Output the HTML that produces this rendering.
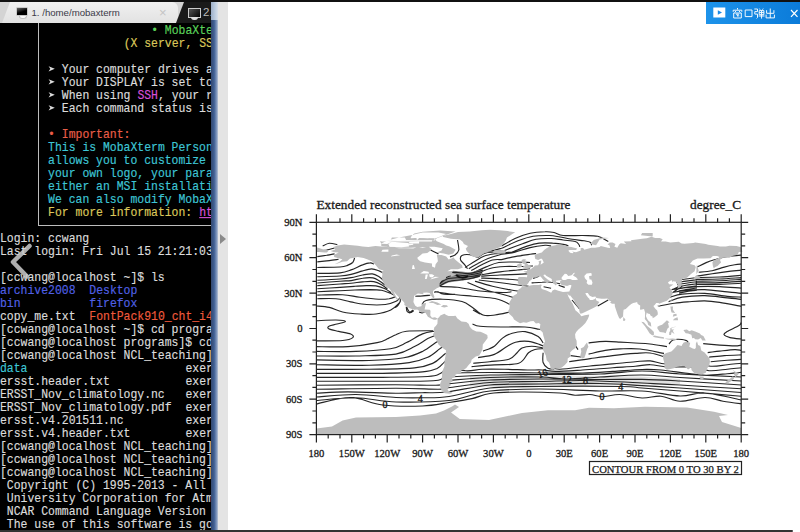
<!DOCTYPE html>
<html><head><meta charset="utf-8"><style>
html,body{margin:0;padding:0;width:800px;height:532px;overflow:hidden;background:#fff;position:relative}
.t{position:absolute;white-space:pre;font-family:"Liberation Mono",monospace;font-size:11.45px;line-height:13px;height:13px;transform:scaleY(1.08);transform-origin:0 10px;-webkit-text-stroke:0.15px currentColor}
#term{position:absolute;left:0;top:23px;width:211px;height:509px;background:#000;overflow:hidden}
#term .in{position:absolute;left:0;top:-23px;width:800px;height:600px}
#tabbar{position:absolute;left:0;top:2px;width:211px;height:21px;background:#d4d4d4;overflow:hidden}
#topbar{position:absolute;left:0;top:0;width:800px;height:2px;background:#111}
#sb{position:absolute;left:211px;top:2px;width:7px;height:530px;background:linear-gradient(90deg,#34486e,#3f5f94 45%,#7f96bc 80%,#b8c4d6)}
#sbtop{position:absolute;left:211px;top:2px;width:7px;height:18px;background:linear-gradient(90deg,#9fb0c8,#b8c8dc 50%,#d8e0ea)}
#strip{position:absolute;left:218px;top:2px;width:10px;height:530px;background:#e4e4e4}
#btn{position:absolute;left:706px;top:2px;width:94px;height:22px;background:linear-gradient(90deg,#1d93ea,#0b7bd9)}
#bot{position:absolute;left:0;top:530px;width:793px;height:2px;background:#333;border-radius:0 2px 2px 0}
svg{position:absolute;left:0;top:0}
</style></head><body>
<div id="term"><div class="in">
<div class="t" style="left:151.14px;top:24.00px;color:#5ad25a">• MobaXterm Personal Edition v8.0</div>
<div class="t" style="left:123.66px;top:37.00px;color:#dcc85a">(X server, SSH client and network tools)</div>
<div class="t" style="left:48.09px;top:63.00px;color:#dcdcdc">  Your computer drives are accessible through the </div>
<div class="t" style="left:48.09px;top:76.00px;color:#dcdcdc">  Your DISPLAY is set to 192.168.1.2:0.0</div>
<div class="t" style="left:48.09px;top:89.00px;color:#dcdcdc">  When using </div>
<div class="t" style="left:137.40px;top:89.00px;color:#d850d8">SSH</div>
<div class="t" style="left:158.01px;top:89.00px;color:#dcdcdc">, your remote DISPLAY is automatically</div>
<div class="t" style="left:48.09px;top:102.00px;color:#dcdcdc">  Each command status is specified by a special</div>
<div class="t" style="left:48.09px;top:128.00px;color:#ea5e48">• Important:</div>
<div class="t" style="left:48.09px;top:141.00px;color:#3ec6d6">This is MobaXterm Personal Edition. The Profes</div>
<div class="t" style="left:48.09px;top:154.00px;color:#3ec6d6">allows you to customize MobaXterm for your com</div>
<div class="t" style="left:48.09px;top:167.00px;color:#3ec6d6">your own logo, your parameters, your welcome m</div>
<div class="t" style="left:48.09px;top:180.00px;color:#3ec6d6">either an MSI installation package or a portab</div>
<div class="t" style="left:48.09px;top:193.00px;color:#3ec6d6">We can also modify MobaXterm or develop the pl</div>
<div class="t" style="left:48.09px;top:206.00px;color:#dcc85a">For more information: </div>
<div class="t" style="left:199.23px;top:206.00px;color:#d850d8;text-decoration:underline">htt</div>
<div class="t" style="left:0.00px;top:232.00px;color:#dcdcdc">Login: ccwang</div>
<div class="t" style="left:0.00px;top:245.00px;color:#dcdcdc">Last login: Fri Jul 15 21:21:03 2016 from 192.168.1.2</div>
<div class="t" style="left:0.00px;top:271.00px;color:#dcdcdc">[ccwang@localhost ~]$ ls</div>
<div class="t" style="left:0.00px;top:284.00px;color:#5060e6">archive2008</div>
<div class="t" style="left:89.31px;top:284.00px;color:#5060e6">Desktop</div>
<div class="t" style="left:0.00px;top:297.00px;color:#5060e6">bin</div>
<div class="t" style="left:89.31px;top:297.00px;color:#5060e6">firefox</div>
<div class="t" style="left:0.00px;top:310.00px;color:#dcdcdc">copy_me.txt</div>
<div class="t" style="left:89.31px;top:310.00px;color:#f05a3c">FontPack910_cht_i486-linux</div>
<div class="t" style="left:0.00px;top:323.00px;color:#dcdcdc">[ccwang@localhost ~]$ cd programs/</div>
<div class="t" style="left:0.00px;top:336.00px;color:#dcdcdc">[ccwang@localhost programs]$ cd NCL_teaching/</div>
<div class="t" style="left:0.00px;top:349.00px;color:#dcdcdc">[ccwang@localhost NCL_teaching]$ ls</div>
<div class="t" style="left:0.00px;top:362.00px;color:#3ec6d6">data</div>
<div class="t" style="left:185.49px;top:362.00px;color:#dcdcdc">exercise</div>
<div class="t" style="left:0.00px;top:375.00px;color:#dcdcdc">ersst.header.txt</div>
<div class="t" style="left:185.49px;top:375.00px;color:#dcdcdc">exercise</div>
<div class="t" style="left:0.00px;top:388.00px;color:#dcdcdc">ERSST_Nov_climatology.nc</div>
<div class="t" style="left:185.49px;top:388.00px;color:#dcdcdc">exercise</div>
<div class="t" style="left:0.00px;top:401.00px;color:#dcdcdc">ERSST_Nov_climatology.pdf</div>
<div class="t" style="left:185.49px;top:401.00px;color:#dcdcdc">exercise</div>
<div class="t" style="left:0.00px;top:414.00px;color:#dcdcdc">ersst.v4.201511.nc</div>
<div class="t" style="left:185.49px;top:414.00px;color:#dcdcdc">exercise</div>
<div class="t" style="left:0.00px;top:427.00px;color:#dcdcdc">ersst.v4.header.txt</div>
<div class="t" style="left:185.49px;top:427.00px;color:#dcdcdc">exercise</div>
<div class="t" style="left:0.00px;top:440.00px;color:#dcdcdc">[ccwang@localhost NCL_teaching]$ ncl</div>
<div class="t" style="left:0.00px;top:453.00px;color:#dcdcdc">[ccwang@localhost NCL_teaching]$ ncl</div>
<div class="t" style="left:0.00px;top:466.00px;color:#dcdcdc">[ccwang@localhost NCL_teaching]$ ncl ex.ncl</div>
<div class="t" style="left:6.87px;top:479.00px;color:#dcdcdc">Copyright (C) 1995-2013 - All Rights Reserved</div>
<div class="t" style="left:6.87px;top:492.00px;color:#dcdcdc">University Corporation for Atmospheric Research</div>
<div class="t" style="left:6.87px;top:505.00px;color:#dcdcdc">NCAR Command Language Version 6.1.2</div>
<div class="t" style="left:6.87px;top:518.00px;color:#dcdcdc">The use of this software is governed by a License</div>
<svg width="60" height="120" viewBox="0 40 60 120" style="position:absolute;left:0;top:40px"><path d="M48.6 66.2 L54.8 68.8 L48.6 71.4 L50.3 68.8Z M48.6 79.2 L54.8 81.8 L48.6 84.4 L50.3 81.8Z M48.6 92.2 L54.8 94.8 L48.6 97.4 L50.3 94.8Z M48.6 105.2 L54.8 107.8 L48.6 110.4 L50.3 107.8Z " fill="#dcdcdc"/></svg>
<div style="position:absolute;left:37.5px;top:23px;width:1px;height:202.5px;background:#bdbdbd"></div>
<div style="position:absolute;left:37.5px;top:225px;width:180px;height:1px;background:#bdbdbd"></div>
<svg width="60" height="60" style="left:0;top:235px" viewBox="0 235 60 60"><path d="M29.5 246 L13 262 L27 276.5" fill="none" stroke="rgba(205,205,205,0.85)" stroke-width="4.5" stroke-linecap="round" stroke-linejoin="round"/></svg>
</div></div>
<div id="tabbar">
 <div style="position:absolute;left:2px;top:0;width:176px;height:21px;background:linear-gradient(#f0f0f0,#e2e2e2);border-radius:0 6px 0 0;clip-path:polygon(8px 0,100% 0,100% 100%,0 100%)"></div>
 <div style="position:absolute;left:176px;top:0;width:40px;height:21px;background:#1a1a1a;clip-path:polygon(8px 0,100% 0,100% 100%,0 100%)"></div>
 <div style="position:absolute;left:15.5px;top:4.5px;width:10px;height:7px;background:linear-gradient(160deg,#666,#000 55%);border:1px solid #c8c8c8;border-radius:1px"></div>
 <div style="position:absolute;left:18.5px;top:13.5px;width:6px;height:2.5px;background:#fafafa;border-radius:0 0 3px 3px;border:1px solid #c4c4c4;border-top:none"></div>
 <div style="position:absolute;left:31.5px;top:5px;font-family:'Liberation Sans',sans-serif;font-size:9.65px;color:#3a3a48;white-space:pre">1. /home/mobaxterm</div>
 <div style="position:absolute;left:159px;top:3px;font-family:'Liberation Sans',sans-serif;font-size:13px;color:#c4c4c4">×</div>
 <div style="position:absolute;left:188px;top:6px;width:11px;height:8px;background:linear-gradient(135deg,#555,#000);border:1px solid #ccc"></div>
 <div style="position:absolute;left:191px;top:15px;width:7px;height:3px;background:#ddd;border-radius:0 0 3px 3px"></div>
 <div style="position:absolute;left:203px;top:4px;font-family:'Liberation Sans',sans-serif;font-size:11.5px;color:#bbb">2.</div>
</div>
<div id="topbar"></div>
<div id="strip"></div>
<div id="sb"></div><div id="sbtop"></div>
<svg width="800" height="532" viewBox="0 0 800 532">
<path d="M220 234 L226 239 L220 244Z" fill="#8a8a8a"/>
<g><path d="M470 376 L520 375 L560 375.5 L600 376 L640 376.5 L680 379 L680 384 L640 384.5 L600 385 L560 386 L520 386.5 L470 386.5Z" fill="#c8c8c8" opacity="0.55"/><path d="M322.7 246.0 C323.8 245.5 326.9 243.5 329.3 243.3 C331.8 243.1 336.0 244.4 337.3 244.6 M317.3 251.3 C318.9 251.1 323.8 250.5 326.6 250.0 C329.5 249.4 333.3 248.3 334.6 248.0 M317.3 256.6 C318.9 256.4 323.8 255.7 326.6 255.3 C329.5 254.8 333.3 254.2 334.6 253.9 M317.3 261.9 C319.3 261.7 325.8 261.0 329.3 260.6 C332.9 260.2 337.1 259.5 338.6 259.3 M317.3 267.5 C321.1 267.4 334.9 267.3 340.0 267.0 C345.0 266.6 345.3 266.2 347.4 265.4 C349.5 264.6 351.5 263.7 352.7 262.5 C353.9 261.2 354.3 258.7 354.6 257.9 M317.3 273.4 C321.1 273.3 334.3 273.4 340.0 272.9 C345.6 272.3 347.4 271.3 351.1 269.9 C354.9 268.6 359.4 266.0 362.6 264.9 C365.7 263.7 368.2 263.0 370.0 262.9 C371.9 262.7 373.2 263.9 373.8 264.1 M317.3 276.8 C321.1 276.7 334.3 276.4 340.0 276.0 C345.6 275.6 347.4 275.3 351.1 274.4 C354.9 273.6 359.2 271.8 362.6 270.9 C366.0 269.9 368.9 268.9 371.6 268.9 C374.4 268.9 377.2 270.2 379.1 270.9 C381.0 271.5 382.4 272.6 383.1 273.0 M317.3 280.3 C321.1 280.1 334.3 279.4 340.0 279.0 C345.6 278.5 347.4 278.3 351.1 277.6 C354.9 277.0 359.1 275.6 362.6 275.0 C366.1 274.4 369.6 273.6 372.3 273.9 C375.1 274.2 377.2 275.7 379.1 276.8 C381.0 278.0 382.9 280.0 383.6 280.6 M317.3 283.0 C321.1 282.7 334.3 281.6 340.0 281.2 C345.6 280.8 347.4 281.1 351.1 280.6 C354.9 280.1 359.0 278.6 362.6 278.2 C366.2 277.7 370.1 277.4 373.0 277.9 C375.8 278.4 377.8 280.1 379.8 281.2 C381.8 282.4 384.1 284.4 385.0 285.0 M317.3 285.6 C321.1 285.4 334.3 284.4 340.0 284.0 C345.6 283.6 347.4 283.6 351.1 283.2 C354.9 282.9 358.8 282.2 362.6 281.9 C366.4 281.6 370.5 281.1 373.8 281.6 C377.0 282.2 379.8 283.8 382.0 285.0 C384.3 286.2 386.5 288.2 387.4 288.8 M317.3 288.8 C321.1 288.6 333.7 287.8 340.0 287.4 C346.2 286.9 350.5 286.6 354.9 286.3 C359.2 286.0 362.7 285.7 366.2 285.6 C369.7 285.6 372.8 285.4 375.9 285.9 C379.0 286.4 382.4 287.7 385.0 288.8 C387.5 290.0 390.1 292.0 391.1 292.7 M317.3 291.8 C321.1 291.6 333.7 291.0 340.0 290.7 C346.2 290.4 349.9 290.2 354.9 290.0 C359.9 289.8 365.6 289.6 370.0 289.6 C374.5 289.7 378.2 289.8 381.4 290.3 C384.5 290.8 386.8 291.9 388.9 292.7 C391.1 293.5 393.2 294.7 394.0 295.1 M317.3 295.1 C321.5 295.0 335.5 294.3 342.6 294.7 C349.7 295.1 354.0 296.6 360.1 297.3 C366.1 298.1 373.9 299.0 378.8 299.2 C383.6 299.4 386.4 299.1 389.2 298.7 C392.1 298.2 394.8 296.9 395.9 296.5 M317.3 298.7 C320.4 298.7 330.4 298.1 336.0 298.7 C341.5 299.2 345.5 300.9 350.6 301.9 C355.7 302.8 360.9 304.1 366.7 304.5 C372.5 305.0 380.5 305.1 385.4 304.5 C390.3 304.0 394.0 302.3 396.1 301.3 C398.3 300.4 398.1 299.1 398.5 298.7 M316.4 306.0 C318.5 306.2 324.9 306.4 329.3 307.4 C333.7 308.4 337.5 310.9 342.6 312.0 C347.7 313.1 354.4 313.7 360.0 314.0 C365.6 314.3 370.9 314.7 376.0 314.0 C381.1 313.3 387.0 311.8 390.8 310.0 C394.6 308.2 397.1 305.0 398.8 303.4 C400.5 301.8 400.5 301.0 400.8 300.5 M316.4 320.7 C319.7 320.6 331.2 319.9 336.0 320.0 C340.8 320.1 345.2 320.7 345.4 321.4 C345.6 322.1 339.7 323.2 337.0 324.0 C334.3 324.8 330.8 325.2 329.4 326.0 C328.0 326.8 327.1 327.8 328.7 328.7 C330.2 329.6 335.0 330.5 338.7 331.4 C342.4 332.3 348.3 333.0 350.7 334.0 C353.1 335.0 354.1 336.5 352.8 337.6 C351.5 338.7 348.8 339.9 342.7 340.5 C336.6 341.1 320.8 340.8 316.4 340.9 M406.8 307.4 C407.2 308.1 408.4 311.6 409.5 312.0 C410.5 312.5 412.2 310.4 412.8 310.0 M316.0 346.6 C321.3 346.6 337.7 347.3 347.9 346.6 C358.2 346.0 370.6 344.0 377.2 342.6 C383.9 341.3 384.8 340.0 387.9 338.6 C391.0 337.3 392.8 335.9 395.9 334.7 C399.0 333.4 400.3 331.9 406.5 331.2 C412.7 330.5 428.7 330.8 433.1 330.7 M316.0 351.4 C322.7 351.4 343.5 351.9 355.9 351.4 C368.4 351.0 382.1 350.2 390.5 348.8 C399.0 347.3 401.2 345.1 406.5 342.6 C411.8 340.2 417.8 335.8 422.5 333.9 C427.2 331.9 432.5 331.6 434.5 331.2 M316.0 356.0 C322.7 356.0 342.6 356.3 355.9 356.0 C369.2 355.6 386.1 355.6 395.9 354.1 C405.6 352.5 409.2 349.2 414.5 346.6 C419.8 344.1 424.0 340.6 427.8 338.6 C431.6 336.7 435.6 335.3 437.1 334.7 M316.0 359.9 C324.9 360.0 354.6 360.8 369.2 360.5 C383.9 360.1 395.0 359.3 403.9 357.8 C412.7 356.3 417.2 354.0 422.5 351.4 C427.8 348.9 432.7 344.6 435.8 342.6 C438.9 340.7 440.2 340.4 441.1 340.0 M316.0 364.7 C324.9 364.8 353.7 365.6 369.2 365.3 C384.8 364.9 399.4 363.9 409.2 362.6 C418.9 361.3 422.7 359.6 427.8 357.3 C432.9 355.0 437.1 350.6 439.8 348.8 C442.5 346.9 443.1 346.5 443.8 346.1 M316.0 369.3 C324.9 369.3 352.8 369.5 369.2 369.3 C385.7 369.0 403.9 369.0 414.5 367.9 C425.2 366.9 428.5 365.1 433.1 363.1 C437.8 361.1 440.4 357.6 442.5 356.0 C444.5 354.3 445.1 353.7 445.7 353.3 M316.0 373.3 C327.1 373.3 364.8 373.5 382.6 373.3 C400.3 373.0 413.4 372.7 422.5 371.9 C431.6 371.1 433.6 370.0 437.1 368.5 C440.7 366.9 442.2 364.0 443.8 362.6 C445.3 361.2 446.0 360.4 446.5 359.9 M316.0 377.3 C327.1 377.3 363.9 377.4 382.6 377.3 C401.2 377.1 418.3 377.0 427.8 376.5 C437.4 375.9 436.7 375.2 439.8 373.8 C442.9 372.4 445.3 368.9 446.5 367.9 M316.0 381.2 C329.3 381.2 376.3 381.3 395.9 381.2 C415.4 381.2 425.4 381.2 433.1 380.7 C440.9 380.3 440.2 379.6 442.5 378.6 C444.8 377.6 446.2 375.3 447.0 374.6 M316.0 385.2 C329.3 385.2 375.9 384.7 395.9 384.7 C415.8 384.7 427.6 385.5 435.8 385.2 C444.0 385.0 443.1 384.0 445.1 383.4 C447.1 382.7 447.3 381.6 447.8 381.2 M316.0 389.2 C329.3 389.1 375.5 388.2 395.9 388.2 C416.3 388.2 430.0 389.3 438.5 389.2 C446.9 389.2 445.1 388.1 446.5 387.9 M316.4 404.0 C322.1 402.9 339.6 397.3 350.6 397.5 C361.6 397.7 370.6 403.6 382.6 405.0 C394.6 406.4 411.4 406.4 422.5 406.0 C433.6 405.6 440.8 403.7 449.0 402.5 C457.2 401.3 465.2 400.1 472.0 398.6 C478.8 397.1 482.0 394.6 490.0 393.5 C498.0 392.4 508.3 392.1 520.0 392.0 C531.7 391.9 550.8 392.5 560.0 393.0 C569.2 393.5 570.0 394.9 575.0 395.2 C580.0 395.4 585.5 394.2 590.0 394.5 C594.5 394.8 597.0 396.7 602.0 396.7 C607.0 396.7 613.3 394.3 620.0 394.5 C626.7 394.7 635.2 397.7 642.0 398.0 C648.8 398.3 654.7 395.7 661.0 396.2 C667.3 396.7 672.7 401.0 680.0 401.2 C687.3 401.4 697.8 397.5 705.0 397.5 C712.2 397.5 717.0 400.1 723.0 401.2 C729.0 402.2 738.2 403.4 741.2 403.8 M316.4 400.5 C323.0 400.1 342.7 397.6 356.0 397.8 C369.3 398.1 380.5 401.6 396.0 402.0 C411.5 402.4 436.3 401.7 449.0 400.5 C461.7 399.3 465.2 396.6 472.0 395.0 C478.8 393.4 478.7 392.0 490.0 391.0 C501.3 390.0 521.7 389.0 540.0 389.0 C558.3 389.0 583.0 390.7 600.0 391.0 C617.0 391.3 628.7 390.2 642.0 391.0 C655.3 391.8 669.5 395.7 680.0 396.0 C690.5 396.3 694.8 392.3 705.0 393.0 C715.2 393.7 735.2 398.8 741.2 400.0 M316.4 397.0 C323.0 396.6 342.7 394.4 356.0 394.5 C369.3 394.6 384.9 396.9 396.0 397.5 C407.1 398.1 413.7 398.0 422.5 397.8 C431.3 397.6 437.8 398.1 449.0 396.5 C460.2 394.9 474.8 389.7 490.0 388.0 C505.2 386.3 518.2 386.8 540.0 386.5 C561.8 386.2 604.0 386.2 621.0 386.5 C638.0 386.8 632.2 387.2 642.0 388.0 C651.8 388.8 663.5 389.6 680.0 391.0 C696.5 392.4 731.0 395.4 741.2 396.3 M316.4 393.2 C321.7 393.0 334.7 391.9 348.0 391.9 C361.3 391.9 383.7 393.1 396.0 393.2 C408.3 393.3 413.5 392.9 422.0 392.7 C430.5 392.5 435.7 393.3 447.0 392.0 C458.3 390.7 474.5 386.3 490.0 385.0 C505.5 383.7 521.7 384.2 540.0 384.0 C558.3 383.8 583.0 383.2 600.0 383.5 C617.0 383.8 628.7 384.9 642.0 385.6 C655.3 386.4 663.5 386.9 680.0 388.0 C696.5 389.1 731.0 391.8 741.2 392.5 M447.0 388.0 C454.2 387.1 474.5 383.6 490.0 382.5 C505.5 381.4 524.2 381.8 540.0 381.5 C555.8 381.2 568.0 380.2 585.0 380.5 C602.0 380.8 626.2 382.2 642.0 383.0 C657.8 383.8 663.5 384.0 680.0 385.0 C696.5 386.0 731.0 388.2 741.2 388.8 M447.0 384.0 C454.2 383.3 474.5 380.8 490.0 380.0 C505.5 379.2 521.7 379.1 540.0 379.0 C558.3 378.9 583.0 379.4 600.0 379.5 C617.0 379.6 628.7 379.1 642.0 379.4 C655.3 379.6 663.5 380.1 680.0 381.0 C696.5 381.9 731.0 384.3 741.2 385.0 M447.0 380.5 C454.2 380.0 474.5 378.1 490.0 377.5 C505.5 376.9 527.2 376.8 540.0 377.0 C552.8 377.2 557.0 379.0 567.0 379.0 C577.0 379.0 587.5 377.7 600.0 377.0 C612.5 376.3 628.7 374.9 642.0 375.0 C655.3 375.1 663.5 376.5 680.0 377.5 C696.5 378.5 731.0 380.4 741.2 381.0 M447.0 377.0 C454.2 376.7 474.5 375.4 490.0 375.0 C505.5 374.6 521.7 374.7 540.0 374.5 C558.3 374.3 583.0 374.6 600.0 374.0 C617.0 373.4 628.7 371.0 642.0 371.0 C655.3 371.0 663.5 373.0 680.0 374.0 C696.5 375.0 731.0 376.5 741.2 377.0 M447.0 373.0 C454.2 372.9 474.0 372.5 490.0 372.5 C506.0 372.5 527.6 372.9 543.0 373.0 C558.4 373.1 571.0 373.3 582.6 373.0 C594.2 372.7 602.8 372.0 612.7 371.4 C622.6 370.8 634.0 369.7 642.0 369.5 C650.0 369.3 653.8 369.4 661.0 370.0 C668.2 370.6 677.5 372.1 685.0 373.0 C692.5 373.9 699.0 375.1 706.0 375.2 C713.0 375.3 721.4 374.2 727.3 373.7 C733.2 373.2 738.9 372.4 741.2 372.2 M447.0 366.0 C450.1 366.8 459.7 370.2 465.6 370.8 C471.5 371.4 475.7 369.6 482.2 369.3 C488.7 369.1 497.2 369.2 504.7 369.3 C512.2 369.4 521.0 369.9 527.3 370.0 C533.6 370.1 537.6 369.8 542.3 370.0 C547.0 370.2 548.9 371.4 555.6 371.4 C562.3 371.4 573.1 370.6 582.6 370.0 C592.1 369.4 603.9 368.3 612.7 367.7 C621.5 367.1 629.0 366.7 635.3 366.2 C641.6 365.7 645.0 364.6 650.3 364.7 C655.6 364.8 660.4 366.6 667.0 367.0 C673.6 367.4 683.0 366.4 690.0 367.0 C697.0 367.6 703.0 370.3 709.2 370.7 C715.4 371.1 722.0 369.7 727.3 369.2 C732.6 368.7 738.9 367.9 741.2 367.7 M552.0 367.0 C553.3 367.4 553.7 369.4 560.0 369.2 C566.3 369.0 581.2 366.9 590.0 366.0 C598.8 365.1 605.2 364.6 612.7 363.9 C620.2 363.2 629.0 362.2 635.3 361.7 C641.6 361.2 645.2 360.5 650.3 360.9 C655.3 361.3 659.0 363.6 665.6 364.0 C672.2 364.4 682.5 362.6 690.0 363.0 C697.5 363.4 704.5 365.9 710.7 366.2 C716.9 366.5 722.2 365.2 727.3 364.7 C732.4 364.2 738.9 363.4 741.2 363.2 M703.2 343.6 C706.0 343.9 714.4 344.7 719.7 345.1 C725.0 345.5 731.2 345.9 734.8 345.9 C738.4 345.9 740.1 345.2 741.2 345.1 M707.7 352.6 C709.7 352.4 715.2 351.6 719.7 351.1 C724.2 350.6 731.2 349.7 734.8 349.6 C738.4 349.5 740.1 350.3 741.2 350.4 M709.2 357.1 C711.7 356.9 719.0 356.0 724.3 355.6 C729.6 355.2 738.4 355.0 741.2 354.9 M710.7 361.7 C713.5 361.4 722.2 360.6 727.3 360.2 C732.4 359.8 738.9 359.5 741.2 359.4 M588.6 342.9 C591.4 342.6 599.9 341.5 605.2 341.4 C610.5 341.3 615.2 341.8 620.2 342.1 C625.2 342.4 630.0 342.7 635.0 343.0 C640.0 343.3 644.7 343.4 650.0 344.0 C655.3 344.6 664.2 346.2 667.0 346.6 M588.6 354.1 C591.4 353.5 599.9 351.3 605.2 350.4 C610.5 349.5 614.4 349.1 620.2 348.9 C626.0 348.7 632.7 348.2 640.0 349.0 C647.3 349.8 660.0 352.7 664.0 353.4 M569.1 361.7 C572.6 361.2 582.9 359.6 590.2 358.6 C597.5 357.6 605.2 356.5 612.7 355.6 C620.2 354.7 629.1 353.8 635.3 353.4 C641.5 353.0 645.0 352.4 650.0 353.0 C655.0 353.6 662.5 356.3 665.0 357.0 M575.0 345.0 L578.0 349.6 M570.6 355.6 L581.0 357.0 M472.5 324.0 C473.8 324.4 475.0 325.8 480.0 326.3 C485.0 326.8 495.0 326.9 502.5 327.0 C510.0 327.1 518.9 326.6 525.0 327.0 C531.1 327.4 535.2 328.6 539.0 329.3 C542.8 330.0 546.5 330.7 548.0 331.0 M483.0 351.1 C484.9 350.3 491.1 348.4 494.4 346.2 C497.6 344.0 499.5 340.3 502.5 338.1 C505.5 335.9 508.4 334.3 512.2 333.2 C516.0 332.1 520.9 331.1 525.2 331.6 C529.5 332.2 535.2 334.6 538.2 336.5 C541.2 338.4 542.3 341.9 543.1 343.0 M478.1 357.6 C480.8 357.1 489.5 356.3 494.4 354.4 C499.3 352.5 503.9 348.2 507.4 346.2 C510.9 344.2 512.0 343.0 515.5 342.2 C519.0 341.4 524.4 341.0 528.5 341.4 C532.6 341.8 537.3 343.8 539.9 344.6 C542.5 345.4 543.2 345.9 543.9 346.2 M473.2 363.3 C475.9 363.0 483.5 362.4 489.5 361.7 C495.5 361.0 504.4 360.7 509.0 359.2 C513.6 357.7 514.9 354.6 517.1 352.7 C519.3 350.8 519.6 349.0 522.0 347.9 C524.4 346.8 528.2 346.2 531.7 346.2 C535.2 346.2 541.2 347.6 543.1 347.9 M471.6 366.6 C475.4 366.3 486.5 365.4 494.4 364.9 C502.2 364.3 513.0 365.3 518.7 363.3 C524.4 361.3 525.8 355.0 528.5 352.7 C531.2 350.4 532.6 350.2 535.0 349.5 C537.4 348.8 541.8 348.8 543.1 348.7 M543.1 352.7 C543.1 354.3 542.3 359.9 543.1 362.5 C543.9 365.1 546.1 367.1 548.0 368.2 C549.9 369.3 553.4 368.9 554.5 369.0 M741.2 322.6 C740.8 323.1 741.4 324.1 739.0 325.6 C736.6 327.1 729.5 330.1 727.0 331.6 C724.5 333.1 723.5 333.6 724.0 334.6 C724.5 335.6 727.1 336.9 730.0 337.6 C732.9 338.3 739.3 338.8 741.2 339.0 M658.1 306.2 C660.9 305.7 669.3 303.9 674.6 303.2 C679.9 302.4 684.7 302.1 689.7 301.7 C694.7 301.3 699.7 300.8 704.7 300.9 C709.7 301.0 713.6 301.5 719.7 302.4 C725.8 303.3 737.6 305.6 741.2 306.2 M669.0 344.0 C669.7 343.3 670.8 340.8 673.0 340.0 C675.2 339.2 679.5 339.2 682.0 339.5 C684.5 339.8 687.8 341.1 688.0 342.0 C688.2 342.9 683.8 344.5 683.0 345.0 M697.2 267.1 C698.7 266.4 703.2 263.9 706.2 262.6 C709.2 261.3 711.7 260.5 715.2 259.5 C718.7 258.5 723.0 257.2 727.3 256.5 C731.6 255.8 738.9 255.2 741.2 255.0 M698.7 272.3 C701.0 272.1 707.9 271.7 712.2 270.8 C716.5 269.9 720.5 268.1 724.3 267.1 C728.1 266.1 732.0 265.3 734.8 264.8 C737.6 264.3 740.1 264.2 741.2 264.1 M697.2 276.1 C699.7 275.7 707.2 274.6 712.2 273.8 C717.2 273.1 722.5 272.2 727.3 271.6 C732.1 271.0 738.9 270.4 741.2 270.1 M695.7 277.6 C699.7 277.5 712.1 277.3 719.7 277.0 C727.3 276.6 737.6 275.6 741.2 275.3 M695.7 279.4 C699.7 279.3 712.1 279.3 719.7 279.0 C727.3 278.7 737.6 277.8 741.2 277.6 M695.7 281.2 C699.7 281.1 712.1 281.1 719.7 280.8 C727.3 280.5 737.6 279.6 741.2 279.4 M695.7 282.9 C699.7 282.9 712.1 282.9 719.7 282.6 C727.3 282.4 737.6 281.6 741.2 281.4 M695.7 284.5 C699.7 284.5 712.1 284.6 719.7 284.4 C727.3 284.2 737.6 283.5 741.2 283.3 M676.0 280.5 C677.7 280.2 682.5 279.5 686.0 279.0 C689.5 278.5 695.2 277.8 697.0 277.5 M676.5 282.6 C678.1 282.4 682.6 281.6 686.0 281.1 C689.4 280.6 695.2 279.9 697.0 279.6 M677.0 284.7 C678.5 284.4 682.7 283.7 686.0 283.2 C689.3 282.7 695.2 281.9 697.0 281.7 M677.5 286.8 C678.9 286.6 682.8 285.8 686.0 285.3 C689.2 284.8 695.2 284.1 697.0 283.8 M678.0 288.9 C679.3 288.6 682.8 287.9 686.0 287.4 C689.2 286.9 695.2 286.1 697.0 285.9 M678.5 291.0 C679.8 290.8 682.9 290.0 686.0 289.5 C689.1 289.0 695.2 288.2 697.0 288.0 M679.0 293.1 C680.2 292.9 683.0 292.1 686.0 291.6 C689.0 291.1 695.2 290.4 697.0 290.1 M671.6 289.6 C673.4 289.4 677.9 288.6 682.2 288.1 C686.5 287.6 691.0 286.9 697.2 286.6 C703.5 286.4 712.4 286.4 719.7 286.6 C727.0 286.9 737.6 287.9 741.2 288.1 M671.6 292.6 C673.9 292.2 679.7 290.9 685.2 290.4 C690.7 289.9 697.7 289.4 704.7 289.6 C711.7 289.9 721.2 291.3 727.3 291.9 C733.4 292.5 738.9 293.1 741.2 293.4 M670.1 297.1 C672.1 296.6 676.4 294.7 682.2 294.1 C688.0 293.5 697.2 293.0 704.7 293.4 C712.2 293.8 721.2 295.8 727.3 296.4 C733.4 297.0 738.9 297.0 741.2 297.1 M668.6 301.7 C670.9 300.9 676.2 298.1 682.2 297.1 C688.2 296.1 697.2 295.5 704.7 295.6 C712.2 295.7 721.2 297.3 727.3 297.9 C733.4 298.5 738.9 299.1 741.2 299.4 M673.3 289.3 C673.9 289.0 675.7 288.2 677.0 287.5 C678.3 286.8 680.3 285.3 681.0 284.9 M673.3 291.9 C674.1 291.4 676.5 290.0 678.0 289.0 C679.5 288.0 681.6 286.5 682.3 286.0 M457.5 240.0 C457.7 241.7 459.2 247.5 458.8 250.0 C458.3 252.5 456.5 253.9 455.0 255.0 C453.5 256.1 450.8 256.6 450.0 256.9 M478.1 257.5 C476.8 257.0 472.7 255.1 470.0 254.8 C467.3 254.4 463.4 254.8 461.9 255.6 C460.3 256.5 460.2 258.5 460.6 260.0 C461.0 261.5 463.2 262.9 464.4 264.4 C465.5 265.8 467.0 268.0 467.5 268.8 M482.5 251.9 C484.2 251.7 489.3 251.2 492.5 250.6 C495.7 250.0 500.0 248.7 501.5 248.3 M477.5 257.5 C478.8 256.8 482.1 254.0 485.0 253.1 C487.9 252.2 492.2 252.3 495.0 251.9 C497.8 251.5 500.4 250.8 501.5 250.6 M465.0 267.5 C466.7 266.5 471.9 263.1 475.0 261.2 C478.1 259.4 480.4 257.5 483.8 256.2 C487.1 255.0 490.3 254.5 495.0 253.8 C499.7 253.0 509.2 252.3 512.0 252.0 M468.8 268.8 C470.2 267.9 474.4 265.4 477.5 263.8 C480.6 262.1 483.5 260.3 487.5 258.8 C491.5 257.2 499.2 255.0 501.5 254.3 M471.2 270.6 C472.9 269.7 477.7 266.8 481.2 265.0 C484.8 263.2 489.1 260.9 492.5 260.0 C495.9 259.1 500.0 259.7 501.5 259.6 M473.8 272.5 C475.8 271.6 482.1 268.6 486.2 266.9 C490.4 265.2 494.0 263.3 498.8 262.5 C503.5 261.7 509.8 262.0 515.0 262.0 C520.2 262.0 527.5 262.4 530.0 262.5 M476.2 274.0 C478.5 273.1 485.2 269.8 490.0 268.5 C494.8 267.2 500.0 266.8 505.0 266.5 C510.0 266.2 515.3 266.6 520.0 266.5 C524.7 266.4 530.8 266.1 533.0 266.0 M480.0 275.0 C483.3 274.5 493.8 272.7 500.0 271.9 C506.2 271.0 512.5 270.5 517.5 270.0 C522.5 269.5 527.9 269.0 530.0 268.8 M481.2 276.2 C484.4 276.0 494.0 275.3 500.0 275.0 C506.0 274.7 512.7 274.6 517.5 274.4 C522.3 274.2 526.9 273.9 528.8 273.8 M481.2 278.1 C484.4 278.2 494.0 278.4 500.0 278.8 C506.0 279.1 512.7 279.6 517.5 280.0 C522.3 280.4 526.9 281.0 528.8 281.2 M478.8 280.0 C482.1 280.4 492.3 281.7 498.8 282.5 C505.2 283.3 512.5 284.4 517.5 285.0 C522.5 285.6 526.9 286.0 528.8 286.2 M475.0 281.2 C477.9 282.1 486.5 284.8 492.5 286.2 C498.5 287.7 505.4 289.0 511.2 290.0 C517.1 291.0 524.8 292.1 527.5 292.5 M467.5 282.5 C470.6 283.8 480.0 287.9 486.2 290.0 C492.5 292.1 499.8 293.5 505.0 295.0 C510.2 296.5 515.4 298.1 517.5 298.8 M426.5 248.0 C427.6 248.6 431.0 250.3 433.0 251.3 C435.0 252.3 437.6 253.6 438.5 254.0 M439.5 286.5 C442.5 286.6 450.8 286.5 457.5 287.2 C464.2 288.0 472.5 290.1 480.0 291.0 C487.5 291.9 497.2 292.4 502.5 292.5 C507.8 292.6 510.0 291.9 511.5 291.8 M435.0 291.8 C437.5 292.1 443.8 293.2 450.0 294.0 C456.2 294.8 465.0 295.5 472.5 296.2 C480.0 297.0 489.8 297.6 495.0 298.5 C500.2 299.4 501.5 300.5 504.0 301.5 C506.5 302.5 509.0 304.0 510.0 304.5 M422.0 304.6 C422.7 303.9 422.6 301.4 426.0 300.5 C429.4 299.6 436.5 299.1 442.5 299.2 C448.5 299.4 457.0 300.1 462.0 301.5 C467.0 302.9 469.0 305.2 472.5 307.5 C476.0 309.8 479.2 313.8 483.0 315.0 C486.8 316.2 490.5 315.5 495.0 315.0 C499.5 314.5 507.5 312.5 510.0 312.0 M420.0 296.2 L429.0 295.5 M501.5 246.1 C503.8 244.8 510.3 240.7 515.0 238.5 C519.8 236.4 525.1 234.4 530.1 233.3 C535.1 232.2 541.1 231.9 545.1 231.8 C549.1 231.6 551.1 231.9 554.1 232.5 C557.1 233.2 558.4 235.0 563.2 235.5 C567.9 236.0 576.9 235.4 582.7 235.5 C588.5 235.7 593.5 235.3 597.7 236.3 C602.0 237.3 606.5 240.7 608.3 241.5 M501.5 248.3 C504.3 247.1 512.8 242.8 518.0 240.8 C523.3 238.8 527.8 237.2 533.1 236.3 C538.3 235.4 545.1 235.4 549.6 235.5 C554.1 235.7 556.4 236.4 560.2 237.0 C563.9 237.7 568.2 238.7 572.2 239.3 C576.2 239.9 581.2 240.3 584.2 240.8 C587.2 241.3 589.0 241.5 590.2 242.3 C591.5 243.1 591.5 244.8 591.7 245.3 M504.5 250.6 C507.5 249.4 517.3 245.7 522.6 243.8 C527.8 241.9 531.3 240.2 536.1 239.3 C540.9 238.4 546.6 238.4 551.1 238.5 C555.6 238.7 559.1 239.5 563.2 240.0 C567.2 240.5 572.6 240.8 575.2 241.5 C577.8 242.3 578.2 243.7 578.9 244.6 C579.7 245.4 579.6 246.4 579.7 246.8 M512.0 252.1 C514.5 251.1 522.6 247.6 527.1 246.1 C531.6 244.6 534.8 243.6 539.1 243.1 C543.4 242.6 548.4 242.8 552.6 243.1 C556.9 243.3 562.0 244.1 564.7 244.6 C567.3 245.1 567.8 245.8 568.4 246.1 M501.5 254.3 C503.8 254.0 510.3 253.2 515.0 252.1 C519.8 250.9 525.1 248.7 530.1 247.6 C535.1 246.4 541.6 245.6 545.1 245.3 C548.6 245.1 550.1 245.9 551.1 246.1 M501.5 259.6 C503.8 259.1 510.3 257.5 515.0 256.6 C519.8 255.7 526.6 254.8 530.1 254.3 C533.6 253.8 535.1 253.7 536.1 253.6 M531.6 282.9 C533.3 282.8 538.8 282.3 542.1 282.2 C545.4 282.0 548.1 281.9 551.1 282.2 C554.1 282.4 558.6 283.4 560.2 283.7 M533.1 278.4 L539.1 276.1 M543.6 286.7 L551.1 288.2 M558.6 285.2 L564.7 287.4 M572.2 274.6 L575.2 278.4 M588.0 273.9 C588.2 274.8 589.1 277.5 589.5 279.1 C589.8 280.8 590.1 282.9 590.2 283.7 M415.3 296.3 C416.6 296.2 420.3 296.1 422.8 295.9 C425.3 295.7 429.1 295.3 430.3 295.2 M434.1 292.2 C434.7 292.1 436.6 291.6 437.9 291.8 C439.1 292.1 440.0 293.3 441.6 293.7 C443.2 294.1 445.3 294.3 447.6 294.4 C449.9 294.5 453.9 294.4 455.2 294.4 M406.3 306.8 C406.4 307.6 406.4 310.3 407.0 311.3 C407.6 312.3 408.9 312.9 410.0 312.8 C411.1 312.7 413.2 311.0 413.8 310.6 M419.0 312.0 C419.5 312.1 421.0 312.8 422.0 312.8 C423.0 312.8 424.5 312.1 425.0 312.0 M399.5 297.0 C399.6 297.6 400.6 299.4 400.3 300.8 C400.1 302.2 398.9 304.2 398.0 305.3 C397.1 306.4 395.5 307.2 395.0 307.6 M473.0 310.0 L480.0 314.0 M572.0 300.0 L579.6 309.0 M597.7 306.0 L608.2 300.0" fill="none" stroke="#262626" stroke-width="1.15" stroke-linejoin="round"/><path d="M439.1 287.0 L448.5 282.6 L461.0 280.8 L470.4 279.5 L479.8 277.0 L483.0 273.0 L479.8 270.1 L470.4 272.6 L461.0 271.4 L452.9 270.8 L445.4 277.0 L439.1 282.0Z" fill="#8c8c8c"/><path d="M439.5 286.0 C441.0 285.2 444.9 282.5 448.5 281.5 C452.1 280.5 457.4 280.3 461.0 279.8 C464.6 279.3 467.2 279.1 470.4 278.5 C473.6 277.9 478.4 276.4 480.0 276.0 M439.5 284.0 C440.8 283.2 443.4 280.1 447.0 279.0 C450.6 277.9 457.0 277.9 461.0 277.5 C465.0 277.1 467.7 277.0 471.0 276.5 C474.3 276.0 479.3 274.8 481.0 274.5 M440.0 282.5 C441.0 281.7 443.5 278.8 446.0 277.5 C448.5 276.2 451.8 275.3 455.0 275.0 C458.2 274.7 461.7 275.7 465.0 275.5 C468.3 275.3 472.2 274.5 475.0 274.0 C477.8 273.5 480.8 272.8 482.0 272.5 M443.0 279.0 C444.0 278.0 446.5 274.1 449.0 273.0 C451.5 271.9 454.8 272.4 458.0 272.5 C461.2 272.6 464.7 273.7 468.0 273.5 C471.3 273.3 475.5 272.1 478.0 271.5 C480.5 270.9 482.2 270.2 483.0 270.0" fill="none" stroke="#222" stroke-width="1.1"/><path d="M456 275 Q462 280 468 276" fill="none" stroke="#111" stroke-width="2"/></g>
<path d="M381.3 243.5 L387.2 240.6 L399.0 237.6 L410.8 235.3 L422.6 232.6 L438.5 232.6 L446.2 234.1 L440.3 236.5 L434.4 238.8 L436.8 241.2 L443.8 244.1 L448.6 247.1 L434.4 246.5 L422.6 247.1 L410.8 247.7 L393.1 247.7 L381.3 245.9Z M540.6 264.8 L545.3 264.8 L550.0 263.8 L554.2 263.3 L553.6 261.2 L557.1 261.0 L556.5 258.6 L561.8 258.3 L564.2 257.7 L555.9 257.7 L554.2 256.5 L553.8 254.1 L558.3 251.8 L558.9 251.2 L554.8 250.8 L549.5 254.7 L549.5 256.5 L551.2 257.7 L548.3 261.2 L545.9 262.4 L543.8 262.4Z M330.6 251.1 L335.3 249.4 L332.9 247.3 L337.6 245.5 L344.1 244.4 L349.4 244.9 L357.7 245.8 L362.4 246.4 L368.3 247.1 L375.4 245.9 L381.3 246.5 L389.6 247.3 L399.0 248.2 L406.1 248.2 L413.2 248.5 L417.9 247.1 L422.6 247.7 L428.5 246.5 L432.0 249.4 L427.3 253.0 L422.6 253.6 L417.3 257.7 L417.9 259.2 L420.2 261.2 L425.0 262.4 L432.0 263.6 L432.0 266.5 L435.0 267.7 L435.6 264.2 L437.9 261.2 L437.4 257.7 L436.8 255.0 L441.5 255.1 L446.2 256.5 L448.6 259.5 L452.1 258.3 L453.3 257.3 L455.1 259.5 L457.4 261.5 L462.1 265.3 L462.7 267.7 L458.0 269.2 L450.9 269.2 L447.4 271.2 L452.7 270.9 L452.1 273.0 L456.8 274.8 L458.0 274.2 L450.9 276.8 L450.9 275.4 L449.7 275.6 L446.2 276.8 L445.6 279.1 L441.5 280.7 L439.7 283.0 L439.1 284.8 L439.7 286.9 L436.8 288.3 L433.2 290.7 L432.9 293.1 L434.4 296.8 L433.9 298.7 L432.3 297.2 L431.1 295.4 L429.7 293.1 L426.7 292.6 L423.2 292.8 L423.4 294.2 L421.4 293.9 L417.9 293.5 L414.1 295.8 L413.8 299.0 L413.4 302.1 L415.3 305.7 L417.3 307.0 L421.4 306.3 L422.1 303.7 L426.1 303.1 L425.2 306.6 L424.6 309.6 L429.7 309.8 L430.5 310.8 L430.3 315.5 L432.0 317.8 L435.0 317.2 L437.4 318.4 L436.2 319.8 L433.8 319.8 L431.4 318.8 L427.9 316.7 L425.6 313.1 L420.8 311.9 L417.3 309.6 L414.3 309.8 L409.6 308.2 L404.3 304.9 L404.5 303.1 L403.1 301.3 L400.2 298.4 L396.0 294.2 L393.3 290.9 L394.3 293.1 L396.0 296.6 L399.0 301.3 L396.6 299.2 L393.7 295.4 L391.9 292.5 L390.5 289.9 L389.0 288.3 L386.5 287.6 L384.2 284.2 L382.5 280.7 L381.9 277.7 L382.5 273.6 L381.7 271.4 L383.7 270.7 L378.9 268.9 L375.4 264.8 L371.9 261.2 L367.7 259.5 L363.6 257.9 L357.7 257.1 L354.2 257.7 L350.0 258.6 L347.1 261.2 L342.4 261.8 L337.6 263.6 L334.7 264.2 L340.0 261.5 L342.4 259.2 L337.6 257.9 L334.1 257.1 L334.1 254.7 L338.8 252.6 L334.1 252.3Z M442.7 235.9 L450.9 234.1 L458.0 232.0 L469.8 231.4 L481.6 230.3 L489.9 229.8 L499.3 230.3 L507.6 231.1 L515.2 232.3 L512.3 234.1 L507.0 237.6 L505.8 240.6 L502.8 244.7 L500.5 247.1 L495.8 248.8 L489.9 251.2 L484.0 253.6 L480.4 255.9 L477.5 257.7 L474.5 257.1 L472.2 256.5 L469.2 253.6 L466.9 251.2 L465.7 248.8 L468.0 245.9 L463.9 244.1 L462.7 241.8 L459.8 239.4 L450.9 238.8 L443.2 237.0Z M455.6 249.8 L453.3 253.6 L448.6 254.7 L443.8 253.6 L436.8 252.4 L441.5 250.6 L442.7 248.2 L433.2 246.5 L428.5 245.9 L422.6 244.1 L428.5 241.8 L437.9 242.7 L443.8 244.7 L449.7 246.5Z M416.7 240.6 L434.4 240.8 L436.8 238.2 L442.7 235.9 L455.6 231.4 L440.3 230.4 L422.6 231.7 L414.3 233.5 L410.8 236.5 L416.7 238.2Z M389.6 246.8 L401.4 247.3 L409.0 246.5 L408.4 242.9 L401.4 242.4 L391.9 241.8 L388.4 244.1Z M381.3 243.8 L387.2 244.1 L391.9 241.8 L387.2 240.8 L380.1 241.2Z M416.7 240.6 L434.4 240.6 L434.4 238.2 L419.1 237.9Z M390.7 240.0 L406.1 240.0 L404.9 237.6 L391.9 237.6Z M408.4 243.5 L419.1 243.5 L419.1 241.2 L409.6 241.8Z M437.4 318.4 L439.1 317.2 L440.3 315.5 L444.4 313.7 L446.2 314.9 L448.6 316.1 L453.3 316.1 L455.6 315.8 L457.4 318.4 L461.5 321.4 L466.3 322.0 L468.6 323.7 L469.8 326.7 L472.2 329.4 L476.3 331.4 L480.4 331.8 L483.4 332.9 L487.3 334.9 L487.7 337.9 L485.1 341.4 L482.8 344.4 L482.5 349.3 L481.0 352.6 L479.2 355.6 L475.7 356.4 L471.6 359.7 L471.0 362.4 L468.6 365.0 L466.3 368.0 L463.9 369.7 L460.9 370.3 L461.5 372.7 L455.6 374.4 L455.1 376.8 L452.1 378.0 L452.7 381.5 L449.1 383.3 L450.9 385.1 L447.4 388.6 L448.0 390.4 L446.2 391.6 L441.5 390.4 L439.7 385.1 L441.5 380.3 L442.1 375.6 L442.1 372.1 L444.4 366.2 L444.4 361.5 L445.6 355.6 L446.0 350.3 L441.5 347.3 L438.5 344.4 L436.8 340.8 L435.0 337.9 L432.9 334.3 L434.2 332.6 L433.8 329.6 L434.4 327.3 L435.8 326.1 L437.4 323.7 L437.6 320.8Z M448.0 390.6 L452.7 393.1 L449.7 393.7 L445.0 393.3 L441.5 391.6Z M522.2 286.0 L521.1 285.0 L518.3 284.8 L518.4 283.0 L517.6 282.5 L518.4 279.5 L517.8 277.7 L519.4 276.9 L524.1 277.1 L527.0 277.3 L527.4 274.2 L525.9 272.7 L523.3 271.4 L527.0 271.0 L527.3 269.8 L530.6 269.2 L532.3 268.1 L534.1 266.5 L534.7 265.5 L538.2 265.2 L539.1 263.0 L538.5 261.2 L541.2 260.4 L541.2 261.8 L540.6 264.8 L541.8 264.8 L545.3 264.8 L550.0 263.8 L554.2 263.3 L553.6 261.2 L557.1 261.0 L556.5 258.6 L561.8 258.3 L564.2 257.7 L555.9 257.7 L554.2 256.5 L553.8 254.1 L558.3 251.8 L558.9 251.2 L554.8 250.8 L549.5 254.7 L549.5 256.5 L551.2 257.7 L548.3 261.2 L545.9 262.4 L543.8 262.4 L542.4 259.5 L541.2 258.6 L538.2 259.9 L535.3 259.1 L534.7 256.5 L534.9 254.7 L538.2 253.6 L541.8 252.4 L544.1 250.0 L546.5 248.2 L548.9 247.1 L551.8 245.9 L556.5 244.9 L559.2 244.6 L562.4 244.7 L565.4 245.5 L567.7 246.5 L571.3 247.1 L577.2 248.6 L576.0 250.0 L569.5 250.0 L568.3 250.8 L570.1 252.7 L572.5 253.2 L573.6 252.4 L571.9 251.6 L576.0 252.3 L580.7 250.4 L580.7 247.9 L583.1 248.0 L584.3 249.7 L591.3 247.7 L594.9 247.7 L599.6 247.1 L600.8 246.1 L607.9 247.7 L610.2 248.0 L609.4 245.3 L607.6 244.5 L609.6 242.4 L612.6 242.5 L615.5 244.1 L614.4 246.8 L617.3 247.7 L619.1 244.5 L620.8 243.2 L626.2 243.9 L623.8 241.6 L631.5 241.2 L630.9 240.3 L642.1 238.8 L646.8 238.2 L651.5 236.8 L655.1 237.9 L659.8 238.1 L662.7 239.3 L661.0 241.5 L665.7 241.6 L670.4 242.4 L678.7 241.8 L681.6 243.5 L684.6 243.8 L693.4 242.9 L695.2 242.6 L705.8 244.1 L708.2 244.8 L717.6 245.9 L720.0 246.4 L725.9 246.4 L729.4 245.8 L736.5 246.1 L741.2 247.2 L742.4 251.8 L738.8 252.1 L737.7 254.7 L732.9 255.7 L729.4 257.7 L724.7 257.7 L721.7 257.9 L720.0 260.0 L721.1 262.4 L719.7 263.8 L717.6 265.9 L715.8 266.8 L713.7 268.3 L712.9 265.9 L712.4 262.4 L713.8 260.3 L717.6 258.5 L719.7 257.1 L717.0 255.9 L712.9 255.9 L710.5 258.3 L703.4 258.5 L697.5 258.5 L692.8 260.6 L689.9 264.1 L694.6 265.3 L695.8 267.1 L694.6 271.2 L691.6 273.6 L686.9 277.7 L683.4 278.2 L681.8 280.1 L681.6 281.9 L681.5 286.0 L680.4 287.3 L678.1 287.9 L677.6 284.8 L676.1 281.7 L672.8 281.3 L672.3 282.5 L671.6 280.1 L668.0 282.2 L669.0 284.3 L673.4 284.6 L669.5 287.2 L671.3 290.1 L672.6 291.9 L672.8 293.3 L672.2 294.8 L669.9 298.1 L666.9 300.7 L662.7 302.3 L659.2 303.7 L658.4 303.1 L656.2 303.1 L654.7 304.9 L653.4 306.0 L655.1 308.4 L657.2 310.5 L657.8 313.1 L657.7 314.8 L654.5 317.2 L652.5 318.3 L652.7 316.7 L650.7 315.7 L649.8 314.1 L647.7 313.4 L646.8 312.6 L645.9 316.1 L647.0 318.4 L648.0 320.3 L650.8 322.8 L651.3 326.8 L648.3 325.1 L647.3 322.0 L644.8 319.0 L645.0 316.7 L645.1 312.5 L644.0 309.0 L640.9 309.8 L640.0 309.6 L640.2 305.5 L637.7 304.0 L637.1 301.9 L635.6 302.5 L633.2 303.0 L631.3 303.9 L629.1 305.7 L625.8 309.0 L623.6 309.8 L623.2 313.1 L623.1 316.4 L621.2 318.1 L620.2 319.0 L619.1 318.0 L617.5 314.3 L616.4 311.0 L614.9 306.6 L614.7 303.7 L611.9 303.8 L610.0 302.3 L611.4 301.6 L609.3 300.6 L607.4 298.5 L604.3 298.7 L601.5 298.7 L596.4 298.0 L595.4 296.5 L592.5 297.1 L589.7 295.7 L587.8 293.1 L585.4 293.1 L586.0 294.8 L588.0 297.5 L589.6 299.0 L589.6 299.9 L592.5 299.9 L594.9 299.1 L595.2 297.4 L596.4 300.4 L599.4 302.1 L597.8 304.3 L597.0 306.0 L594.3 307.5 L591.3 308.9 L586.6 311.2 L581.9 313.4 L580.0 313.5 L579.3 310.8 L579.1 308.6 L576.2 304.9 L574.9 302.7 L574.2 300.6 L570.2 295.4 L569.6 295.3 L569.2 296.0 L567.3 293.2 L568.3 296.6 L570.7 300.7 L572.7 303.7 L574.2 307.2 L575.4 310.2 L577.8 312.2 L579.9 314.3 L581.3 316.2 L584.9 315.2 L589.2 314.5 L589.0 316.1 L587.8 319.0 L585.4 323.1 L582.5 326.1 L578.4 329.6 L576.2 332.0 L575.1 334.3 L575.4 337.9 L576.6 340.8 L576.8 345.0 L575.4 347.9 L572.2 350.3 L570.1 352.6 L570.7 356.2 L567.7 358.5 L567.5 362.1 L564.8 365.0 L561.8 367.4 L558.9 368.6 L555.4 368.6 L552.4 369.5 L550.5 368.6 L550.3 366.2 L549.1 362.7 L546.7 360.3 L545.8 355.6 L543.0 349.7 L542.6 347.3 L543.3 344.4 L545.0 341.4 L543.3 335.5 L542.7 332.6 L539.8 329.6 L540.1 326.1 L540.4 324.3 L538.8 323.1 L535.9 323.4 L533.5 320.9 L530.6 321.3 L526.4 322.8 L523.5 322.3 L520.0 323.3 L517.0 321.4 L514.0 319.6 L512.9 317.2 L511.1 315.5 L509.1 313.7 L508.1 311.1 L509.3 309.0 L509.7 305.5 L508.7 303.7 L511.1 299.6 L513.5 295.8 L517.0 293.7 L517.2 291.3 L518.8 289.2 L521.1 288.1 L522.0 286.2 L526.4 287.1 L530.0 285.4 L533.5 284.9 L538.9 284.9 L540.8 284.6 L541.8 285.0 L540.8 286.9 L541.8 288.9 L546.5 290.4 L551.2 292.7 L552.5 290.5 L554.8 289.6 L558.3 290.8 L563.0 292.0 L566.9 291.7 L569.3 291.5 L570.1 289.5 L571.2 286.6 L571.3 285.0 L569.5 285.0 L567.1 285.9 L564.8 285.6 L561.8 285.2 L560.1 283.0 L560.1 281.3 L562.4 280.1 L563.0 280.0 L559.5 280.3 L555.7 280.7 L557.1 283.6 L555.9 285.4 L553.6 283.6 L551.8 281.5 L551.8 279.1 L546.5 276.0 L545.0 274.5 L543.3 275.0 L544.7 277.1 L547.7 279.5 L550.6 281.2 L548.9 280.7 L548.3 282.5 L547.2 283.4 L543.0 279.5 L540.6 276.6 L537.6 276.8 L535.9 277.7 L532.6 277.4 L532.3 278.9 L528.4 281.9 L528.8 282.7 L526.4 285.2Z M316.4 247.2 L323.5 249.4 L328.6 250.6 L327.0 252.4 L324.7 252.6 L316.4 251.8Z M522.1 269.5 L530.6 268.3 L530.8 266.3 L528.8 265.3 L527.0 263.6 L526.4 262.4 L524.7 260.4 L526.7 260.5 L525.3 259.3 L522.9 259.3 L521.5 260.6 L522.2 263.0 L523.1 263.8 L525.3 264.8 L525.3 265.6 L523.4 266.2 L522.7 267.5 L525.0 267.8Z M521.7 267.1 L521.7 263.8 L520.0 263.2 L517.0 264.8 L516.6 267.5 L519.4 267.7Z M492.2 252.4 L494.6 250.3 L502.8 250.0 L506.4 250.8 L505.2 253.6 L498.1 253.8Z M590.2 244.1 L596.1 245.2 L599.6 239.4 L609.0 237.9 L602.0 237.6 L593.7 240.0Z M640.9 235.3 L652.7 236.5 L652.7 232.9 L642.1 232.9Z M696.4 274.2 L698.7 270.7 L697.5 266.5 L697.0 264.4 L696.4 267.7Z M694.0 279.5 L696.4 278.9 L700.5 277.4 L696.4 274.9 L694.0 277.7Z M670.6 301.9 L672.6 299.0 L671.6 298.7 L670.4 300.7Z M656.9 305.8 L659.2 304.9 L659.8 305.5 L658.6 307.0Z M670.4 306.6 L673.0 306.6 L672.8 309.6 L675.1 313.1 L671.6 312.5 L671.0 310.8Z M672.8 320.2 L678.1 320.2 L677.5 317.2 L674.5 318.4Z M672.8 316.7 L676.9 315.5 L676.3 313.7 L673.4 314.3Z M623.0 320.8 L625.0 320.8 L625.4 319.6 L623.4 316.9Z M657.4 326.7 L659.8 325.5 L662.1 324.7 L665.1 322.0 L666.9 320.2 L669.5 322.2 L668.0 323.1 L669.0 327.3 L667.5 328.5 L666.3 331.4 L665.7 333.2 L663.9 332.6 L659.8 332.0 L658.6 330.2 L657.4 328.5Z M641.3 321.8 L643.9 322.3 L647.2 325.9 L651.5 329.6 L653.9 332.0 L653.9 335.3 L652.1 335.3 L649.5 333.2 L647.2 329.6 L645.0 326.3Z M652.9 336.5 L654.5 335.5 L659.2 336.5 L663.9 337.3 L663.9 338.7 L658.6 338.1 L654.5 337.2Z M664.5 338.4 L669.2 338.8 L672.8 338.5 L676.3 339.1 L678.7 338.2 L675.1 340.6 L666.9 339.2Z M669.2 334.9 L671.0 334.9 L671.6 332.0 L674.5 334.1 L672.8 330.8 L674.3 329.6 L671.6 329.6 L671.6 327.3 L675.7 326.7 L676.3 326.7 L670.4 327.9 L670.2 330.8 L669.2 332.6Z M683.4 329.9 L686.9 329.4 L689.3 331.2 L691.6 330.3 L695.2 331.5 L699.9 333.5 L701.1 335.1 L703.4 336.1 L705.8 340.6 L702.3 340.5 L700.8 337.9 L698.1 339.4 L695.2 339.2 L694.0 337.9 L692.2 338.2 L691.4 334.7 L688.1 333.5 L685.7 333.2 L684.6 331.8Z M662.7 354.4 L663.3 359.1 L664.5 363.8 L664.5 368.0 L666.9 369.7 L673.9 368.3 L677.5 366.5 L681.0 365.7 L684.6 366.2 L688.1 369.4 L691.1 367.4 L691.6 370.3 L694.0 372.7 L698.1 374.2 L701.4 374.6 L705.8 372.7 L707.3 368.3 L709.3 365.0 L710.0 361.5 L709.3 357.9 L706.7 355.0 L704.6 352.6 L701.3 350.6 L700.3 346.1 L698.1 345.0 L697.0 341.2 L695.9 343.4 L695.8 347.9 L694.6 349.1 L692.8 348.5 L689.3 346.7 L690.2 342.8 L685.7 341.8 L683.4 342.8 L681.6 346.0 L679.6 345.6 L677.5 345.0 L675.1 347.7 L673.0 349.9 L671.3 351.6 L668.0 352.5 L666.3 353.0 L664.1 354.2Z M699.5 376.5 L703.8 376.7 L703.4 379.2 L701.7 379.9 L699.9 378.3Z M732.6 369.1 L734.7 371.5 L739.4 372.9 L737.7 375.0 L735.3 377.4 L734.8 375.4 L733.9 374.7 L734.7 372.7Z M732.6 376.2 L734.5 377.4 L732.9 380.1 L730.6 381.5 L727.4 383.4 L725.3 382.7 L727.6 380.3 L730.6 378.3Z M587.0 342.6 L588.4 346.7 L587.2 349.1 L585.4 355.0 L584.3 357.9 L581.9 358.5 L580.2 356.2 L581.3 351.4 L580.7 348.5 L583.7 347.0 L585.4 344.4Z M428.5 302.7 L432.0 301.1 L437.4 302.5 L441.2 304.6 L437.4 305.1 L433.2 303.1Z M440.9 306.7 L443.2 305.0 L446.8 305.3 L448.1 306.6 L444.4 307.6Z M316.4 428.5 L332.0 426.5 L342.6 420.5 L356.0 417.5 L396.0 417.0 L420.0 415.5 L436.0 413.5 L444.0 410.5 L452.0 406.5 L455.0 404.5 L459.0 407.0 L451.0 412.5 L459.8 419.0 L489.0 420.0 L522.0 413.0 L548.0 410.3 L575.0 410.3 L589.0 407.8 L614.0 408.3 L645.0 406.8 L687.0 407.5 L714.0 411.7 L728.0 415.0 L719.0 416.0 L722.0 422.0 L741.2 428.0 L741.2 434.6 L316.4 434.6Z" fill="#bdbdbd" stroke="none" fill-rule="nonzero"/>
<path d="M584.3 276.0 L586.6 273.6 L591.3 273.0 L591.9 275.4 L589.0 276.2 L589.6 279.5 L591.3 279.5 L592.5 282.5 L591.9 284.8 L588.4 284.8 L586.6 283.0 L587.2 280.7 L584.9 278.3Z M561.8 279.3 L561.5 277.7 L562.8 276.0 L564.8 273.7 L566.6 274.0 L568.3 276.0 L570.7 275.4 L572.0 274.9 L573.6 272.9 L575.2 272.8 L574.0 274.0 L573.0 275.4 L574.2 276.2 L576.0 277.3 L578.0 279.4 L576.0 280.1 L572.5 279.9 L570.1 278.9 L567.7 279.0 L565.4 280.0 L563.1 279.9Z M412.0 268.9 L414.9 268.9 L413.8 265.0 L412.6 265.3Z M420.2 273.4 L429.1 273.6 L428.5 271.8 L423.8 270.9Z M425.0 279.1 L426.7 279.1 L427.9 274.4 L425.6 274.4Z M429.7 277.1 L432.3 277.4 L434.4 275.4 L432.0 274.2 L429.1 274.2Z M430.3 279.5 L435.8 278.0 L439.1 277.1 L435.0 276.8 L431.4 278.6Z M381.3 251.8 L388.4 251.8 L388.4 249.4 L382.5 249.7Z M390.7 256.5 L400.2 255.3 L396.6 254.4 L391.9 255.6Z" fill="#fff"/>
<path d="M381.3 240.8 L399.0 240.6 L416.7 240.9 L432.0 240.8 M389.6 245.9 L404.9 245.3 L413.2 244.1 M410.8 237.6 L419.1 237.0 L428.5 237.6" fill="none" stroke="#fff" stroke-width="1.3"/>
<g font-family="Liberation Serif" font-size="10" fill="#1a1a1a" stroke="#1a1a1a" stroke-width="0.35"><text x="385" y="407.6" text-anchor="middle">0</text><text x="420.3" y="401.5" text-anchor="middle">4</text><text x="542.7" y="376.8" text-anchor="middle" transform="rotate(-20 542.7 373.5)">16</text><text x="566.7" y="382.8" text-anchor="middle">12</text><text x="585.5" y="383.6" text-anchor="middle">8</text><text x="620.7" y="389.5" text-anchor="middle">4</text><text x="602" y="400.0" text-anchor="middle">0</text></g>
<rect x="316.4" y="222.3" width="424.8" height="212.3" fill="none" stroke="#222" stroke-width="1.2"/>
<path d="M316.4 434.6V442.6 M316.4 222.3V214.3 M328.2 434.6V438.6 M328.2 222.3V218.3 M340.0 434.6V438.6 M340.0 222.3V218.3 M351.8 434.6V442.6 M351.8 222.3V214.3 M363.6 434.6V438.6 M363.6 222.3V218.3 M375.4 434.6V438.6 M375.4 222.3V218.3 M387.2 434.6V442.6 M387.2 222.3V214.3 M399.0 434.6V438.6 M399.0 222.3V218.3 M410.8 434.6V438.6 M410.8 222.3V218.3 M422.6 434.6V442.6 M422.6 222.3V214.3 M434.4 434.6V438.6 M434.4 222.3V218.3 M446.2 434.6V438.6 M446.2 222.3V218.3 M458.0 434.6V442.6 M458.0 222.3V214.3 M469.8 434.6V438.6 M469.8 222.3V218.3 M481.6 434.6V438.6 M481.6 222.3V218.3 M493.4 434.6V442.6 M493.4 222.3V214.3 M505.2 434.6V438.6 M505.2 222.3V218.3 M517.0 434.6V438.6 M517.0 222.3V218.3 M528.8 434.6V442.6 M528.8 222.3V214.3 M540.6 434.6V438.6 M540.6 222.3V218.3 M552.4 434.6V438.6 M552.4 222.3V218.3 M564.2 434.6V442.6 M564.2 222.3V214.3 M576.0 434.6V438.6 M576.0 222.3V218.3 M587.8 434.6V438.6 M587.8 222.3V218.3 M599.6 434.6V442.6 M599.6 222.3V214.3 M611.4 434.6V438.6 M611.4 222.3V218.3 M623.2 434.6V438.6 M623.2 222.3V218.3 M635.0 434.6V442.6 M635.0 222.3V214.3 M646.8 434.6V438.6 M646.8 222.3V218.3 M658.6 434.6V438.6 M658.6 222.3V218.3 M670.4 434.6V442.6 M670.4 222.3V214.3 M682.2 434.6V438.6 M682.2 222.3V218.3 M694.0 434.6V438.6 M694.0 222.3V218.3 M705.8 434.6V442.6 M705.8 222.3V214.3 M717.6 434.6V438.6 M717.6 222.3V218.3 M729.4 434.6V438.6 M729.4 222.3V218.3 M741.2 434.6V442.6 M741.2 222.3V214.3 M316.4 222.3H309.4 M741.2 222.3H748.2 M316.4 234.1H312.4 M741.2 234.1H745.2 M316.4 245.9H312.4 M741.2 245.9H745.2 M316.4 257.7H309.4 M741.2 257.7H748.2 M316.4 269.5H312.4 M741.2 269.5H745.2 M316.4 281.3H312.4 M741.2 281.3H745.2 M316.4 293.1H309.4 M741.2 293.1H748.2 M316.4 304.9H312.4 M741.2 304.9H745.2 M316.4 316.7H312.4 M741.2 316.7H745.2 M316.4 328.5H309.4 M741.2 328.5H748.2 M316.4 340.2H312.4 M741.2 340.2H745.2 M316.4 352.0H312.4 M741.2 352.0H745.2 M316.4 363.8H309.4 M741.2 363.8H748.2 M316.4 375.6H312.4 M741.2 375.6H745.2 M316.4 387.4H312.4 M741.2 387.4H745.2 M316.4 399.2H309.4 M741.2 399.2H748.2 M316.4 411.0H312.4 M741.2 411.0H745.2 M316.4 422.8H312.4 M741.2 422.8H745.2 M316.4 434.6H309.4 M741.2 434.6H748.2" stroke="#222" stroke-width="1.2" fill="none"/>
<g font-family="Liberation Serif" font-size="10.6" fill="#1a1a1a" stroke="#1a1a1a" stroke-width="0.3">
<text x="316.4" y="456.5" text-anchor="middle">180</text>
<text x="351.8" y="456.5" text-anchor="middle">150W</text>
<text x="387.2" y="456.5" text-anchor="middle">120W</text>
<text x="422.6" y="456.5" text-anchor="middle">90W</text>
<text x="458.0" y="456.5" text-anchor="middle">60W</text>
<text x="493.4" y="456.5" text-anchor="middle">30W</text>
<text x="528.8" y="456.5" text-anchor="middle">0</text>
<text x="564.2" y="456.5" text-anchor="middle">30E</text>
<text x="599.6" y="456.5" text-anchor="middle">60E</text>
<text x="635.0" y="456.5" text-anchor="middle">90E</text>
<text x="670.4" y="456.5" text-anchor="middle">120E</text>
<text x="705.8" y="456.5" text-anchor="middle">150E</text>
<text x="741.2" y="456.5" text-anchor="middle">180</text>
<text x="302.5" y="225.9" text-anchor="end">90N</text>
<text x="302.5" y="261.3" text-anchor="end">60N</text>
<text x="302.5" y="296.7" text-anchor="end">30N</text>
<text x="302.5" y="332.1" text-anchor="end">0</text>
<text x="302.5" y="367.4" text-anchor="end">30S</text>
<text x="302.5" y="402.8" text-anchor="end">60S</text>
<text x="302.5" y="438.2" text-anchor="end">90S</text>
<text x="316.5" y="208.8" font-size="13.3">Extended reconstructed sea surface temperature</text>
<text x="741" y="208.8" font-size="13.3" text-anchor="end">degree_C</text>
</g>
<rect x="589.5" y="461.5" width="152" height="13" fill="#fff" stroke="#222" stroke-width="1.2"/>
<text x="665.5" y="472.5" font-family="Liberation Serif" font-size="10.65" fill="#1a1a1a" stroke="#1a1a1a" stroke-width="0.25" text-anchor="middle">CONTOUR FROM 0 TO 30 BY 2</text>
</svg>
<div id="btn">
 <svg width="94" height="22" viewBox="0 0 94 22" style="left:0;top:0">
 <rect x="7.3" y="5.5" width="12" height="10" fill="#fff"/>
 <path d="M11.8 8.2 L16 10.5 L11.8 12.8Z" fill="#1a8ae6"/>
 <path d="M85 8 L91.5 14.8 M91.5 8 L85 14.8" stroke="#fff" stroke-width="1.2" fill="none"/>
 <g stroke="#fff" stroke-width="1" fill="none" opacity="0.95">
  <path d="M31.5 6 V7.5 M27.2 9.8 V8.2 H35.8 V9.8 M30.2 8.8 L28.6 10.4 M32.8 8.8 L34.4 10.4 M27.7 16 V11 H35.3 V16 H27.7 M30 12.3 L32.5 12 L31 14 L33.2 13.8"/>
  <path d="M39.2 8 H46 V14.6 H39.2 Z"/>
  <path d="M48.3 7 H51.5 V9.6 H48.8 V12.1 H51.5 V15.6 L50.6 16.4 M53.4 6.6 L54.1 7.7 M57.2 6.6 L56.5 7.7 M53.2 8.6 H57.9 V12.7 H53.2 Z M53.2 10.6 H57.9 M55.55 8.6 V16.6 M52.6 14 H58.5"/>
  <path d="M64.25 6.5 V16 M60.6 8.2 V11.3 H67.9 V8.2 M60.1 12.6 V15.9 H68.4 V12.6"/>
 </g></svg>
</div>
<div id="bot"></div>
</body></html>
